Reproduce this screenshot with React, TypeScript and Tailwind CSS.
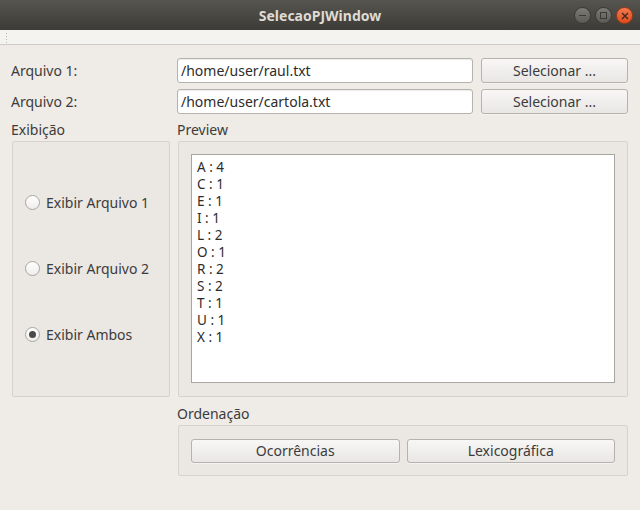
import React from "react";

const LINES = ["A : 4", "C : 1", "E : 1", "I : 1", "L : 2", "O : 1", "R : 2", "S : 2", "T : 1", "U : 1", "X : 1"];

const FONT = { fontFamily: '"Noto Sans", "DejaVu Sans", sans-serif' };

function Button({ children, className = "" }: { children: React.ReactNode; className?: string }) {
  return (
    <div
      className={`flex items-center justify-center rounded-[3px] border border-[#b6b2ad] bg-gradient-to-b from-[#f8f7f6] to-[#e9e7e4] text-[14px] text-[#3c3c3c] shadow-[0_1px_0_#f5f3f1] ${className}`}
    >
      {children}
    </div>
  );
}

function Radio({ label, checked }: { label: string; checked?: boolean }) {
  return (
    <div className="flex h-[21px] items-center gap-[6px] pl-[12px]">
      <div className="flex h-[15px] w-[15px] items-center justify-center rounded-full border border-[#a9a5a0] bg-gradient-to-b from-[#ffffff] to-[#f0eeec]">
        {checked && <div className="h-[7px] w-[7px] rounded-full bg-[#4a4a4a]" />}
      </div>
      <span className="text-[14px] text-[#3c3c3c]">{label}</span>
    </div>
  );
}

export default function App() {
  return (
    <div className="flex h-[510px] w-[640px] flex-col overflow-hidden bg-[#efebe7]" style={FONT}>
      {/* title bar */}
      <div className="relative flex h-[30px] items-center justify-center bg-gradient-to-b from-[#56554f] to-[#3c3b37]">
        <span className="text-[14px] font-bold text-[#dfdbd2]">SelecaoPJWindow</span>
        <div className="absolute right-[7px] top-[7px] flex gap-[4px]">
          <div className="flex h-[17px] w-[17px] items-center justify-center rounded-full border border-[#3a3935] bg-gradient-to-b from-[#7d7c77] to-[#5b5a55]">
            <div className="h-[1.5px] w-[7px] bg-[#3a3935]" />
          </div>
          <div className="flex h-[17px] w-[17px] items-center justify-center rounded-full border border-[#3a3935] bg-gradient-to-b from-[#7d7c77] to-[#5b5a55]">
            <div className="h-[7px] w-[7px] border-[1.5px] border-[#3a3935]" />
          </div>
          <div className="flex h-[17px] w-[17px] items-center justify-center rounded-full border border-[#a23a15] bg-gradient-to-b from-[#f37850] to-[#df4a16]">
            <svg width="8" height="8" viewBox="0 0 8 8">
              <path d="M1 1 L7 7 M7 1 L1 7" stroke="#3a2a20" strokeWidth="1.4" />
            </svg>
          </div>
        </div>
      </div>

      {/* toolbar strip */}
      <div className="flex h-[15px] border-b border-[#cfcbc6] bg-[#f5f3f0] pl-[5px]">
        <div className="mt-[2px] h-[11px] w-[3px] bg-[radial-gradient(circle,#b8b4ae_0.6px,transparent_0.8px)] bg-[length:3px_3px]" />
      </div>

      {/* body */}
      <div className="flex flex-1 flex-col pl-[11px] pr-[12px] pt-[13px] text-[14px] text-[#3c3c3c]">
        <div className="flex h-[25px] items-center">
          <span className="w-[166px]">Arquivo 1:</span>
          <div className="flex h-[25px] w-[296px] items-center rounded-[3px] border border-[#b6b2ad] bg-white pl-[3px] text-[#2c2c2c] shadow-[inset_0_1px_1px_rgba(0,0,0,0.08)]">
            /home/user/raul.txt
          </div>
          <Button className="ml-[8px] h-[25px] w-[147px]">Selecionar ...</Button>
        </div>
        <div className="mt-[6px] flex h-[25px] items-center">
          <span className="w-[166px]">Arquivo 2:</span>
          <div className="flex h-[25px] w-[296px] items-center rounded-[3px] border border-[#b6b2ad] bg-white pl-[3px] text-[#2c2c2c] shadow-[inset_0_1px_1px_rgba(0,0,0,0.08)]">
            /home/user/cartola.txt
          </div>
          <Button className="ml-[8px] h-[25px] w-[147px]">Selecionar ...</Button>
        </div>

        <div className="mt-[5px] flex">
          {/* Exibição */}
          <div className="flex w-[159px] flex-col">
            <span className="h-[21px] leading-[21px]">Exibição</span>
            <div className="ml-[1px] mt-[1px] flex h-[256px] flex-col justify-center gap-[45px] rounded-[2px] border border-[#d6d2cd] bg-[#ebe7e3] pb-[2px]">
              <Radio label="Exibir Arquivo 1" />
              <Radio label="Exibir Arquivo 2" />
              <Radio label="Exibir Ambos" checked />
            </div>
          </div>

          {/* Preview + Ordenação */}
          <div className="ml-[7px] flex flex-1 flex-col">
            <span className="h-[21px] leading-[21px]">Preview</span>
            <div className="ml-[1px] mt-[1px] h-[256px] rounded-[2px] border border-[#d6d2cd] bg-[#ebe7e3] p-[12px] pb-[13px]">
              <div className="h-full border border-[#a9a5a0] bg-white pl-[5px] pt-[4px] text-[#2c2c2c]">
                {LINES.map((l) => (
                  <div key={l} className="h-[17px] text-[13.5px] leading-[17px]">
                    {l}
                  </div>
                ))}
              </div>
            </div>

            <span className="mt-[6px] h-[21px] leading-[21px]">Ordenação</span>
            <div className="ml-[1px] mt-[1px] flex h-[51px] items-center gap-[7px] rounded-[2px] border border-[#d6d2cd] bg-[#ebe7e3] px-[12px]">
              <Button className="h-[24px] flex-1">Ocorrências</Button>
              <Button className="h-[24px] flex-1">Lexicográfica</Button>
            </div>
          </div>
        </div>
      </div>
    </div>
  );
}
